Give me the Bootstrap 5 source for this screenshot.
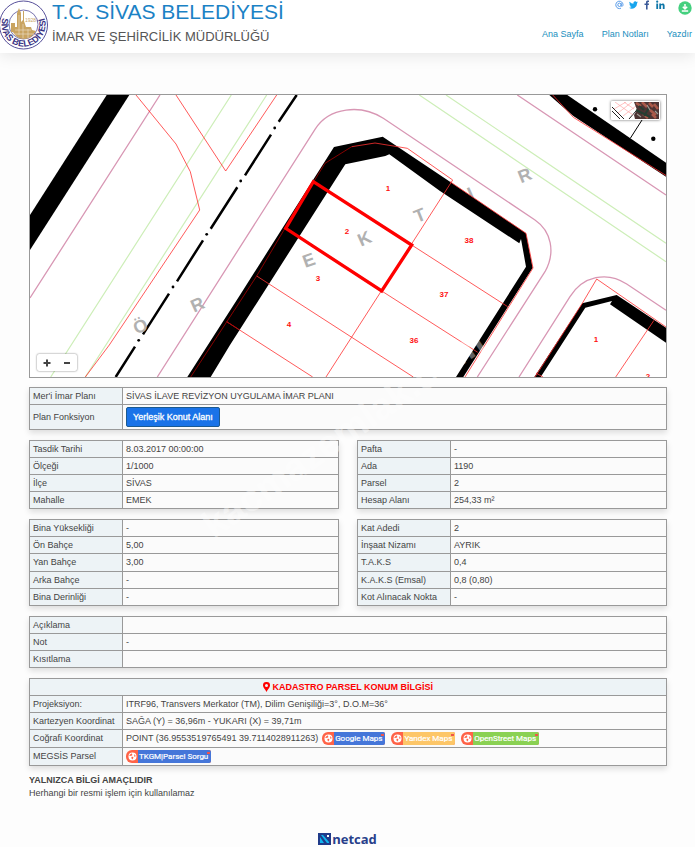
<!DOCTYPE html>
<html lang="tr">
<head>
<meta charset="utf-8">
<meta name="viewport" content="width=device-width, initial-scale=1">
<title>T.C. Sivas Belediyesi - İmar Durumu</title>
<link href="https://cdn.jsdelivr.net/npm/bootstrap@5.3.0/dist/css/bootstrap.min.css" rel="stylesheet">
<style>
body{font-family:"Liberation Sans",Arial,sans-serif;font-size:9px;line-height:13px;color:#444;background:#fdfdfd}
.site-head{background:#fff;height:53px;box-shadow:0 2px 15px rgba(0,0,0,.1)}
.brand-seal{width:48px;height:50px;flex:none}
.brand-name{font-size:21px;line-height:24px;color:#1b82c5;margin:0;font-weight:400}
.brand-unit{font-size:13px;line-height:26px;color:#555;margin:0;font-weight:400}
.brand-text{padding-left:4px}
.head-side{padding-right:3px}
.social{gap:5px;height:17px}
.social a{height:10px;display:block;line-height:0}
.social svg{display:block}
.main-links{gap:18px;padding-top:11px}
.main-links a{color:#1a8fbe;text-decoration:none}
main{padding:41px 28px 0 29px}
.map-box{border:1px solid #999;position:relative;background:#fff;margin-bottom:9px}
.map-box>svg{display:block;width:100%;height:auto}
.map-zoom{left:7px;bottom:6px;background:#fff;border-radius:2px;box-shadow:0 0 2px rgba(0,0,0,.6);display:flex}
.map-zoom button{border:0;background:none;width:20px;height:17px;padding:0;line-height:0;display:flex;align-items:center;justify-content:center}
.map-layer{right:6px;top:6px;border:0;padding:1px;background:#fff;box-shadow:0 0 3px rgba(0,0,0,.6);line-height:0;border-radius:1px}
.info{width:100%;border-collapse:collapse;table-layout:fixed;background:#fbfbfb;box-shadow:0 3px 6px rgba(0,0,0,.13);margin-bottom:10px}
.info tr{height:17px}
.info tr.tall{height:18px}
.info tr.tag-line{height:25px}
.info th,.info td{border:1px solid #999;padding:0 3px;line-height:13px;vertical-align:middle}
.info th{background:#edf3f6;font-weight:400;width:93px;white-space:nowrap}
.info .info-title{color:#f00;font-weight:700;text-align:center;width:auto}
.pair{display:grid;grid-template-columns:1fr 1fr;column-gap:18px}
.fn-btn{background:#1a73e8;color:#fff;border:1px solid #1c5a91;border-radius:2px;font-size:9px;line-height:13px;padding:3px 6px 2px;font-weight:400;-webkit-text-stroke:.3px #fff}
.ext{display:inline-flex;height:13px;line-height:13px;color:#fff;text-decoration:none;border-radius:6px 2px 2px 6px;overflow:hidden;font-family:Roboto,sans-serif;font-size:8px;vertical-align:middle;background:#ff6347;position:relative}
.ext:hover{color:#fff}
.ext svg{margin:2px 1px 2px 2px;flex:none}
.ext span{padding:0 3px 0 1px;-webkit-text-stroke:.2px #fff}
.ext::after{content:"";position:absolute;right:1px;top:2px;width:3px;height:2px;background:#f0544a}
.ext-blue span{background:#4576d9}
.ext-amber span{background:#fdc668}
.ext-green span{background:#8ad153}
.links{gap:6px}
.netcad{color:#27408b;font:700 13px/14px "Open Sans",sans-serif;text-decoration:none;gap:1px}
.wmark{left:167px;top:412px;width:352px;font-size:38px;line-height:42px;font-weight:700;color:rgba(255,255,255,.4);transform:rotate(-35deg);pointer-events:none;white-space:nowrap;text-align:center}
.lot{font:700 8px "Liberation Sans",sans-serif;fill:#f11;text-anchor:middle}
.street{font:700 18px "Liberation Sans",sans-serif;fill:#b1b1b1;text-anchor:middle}
</style>
<script src="https://cdn.jsdelivr.net/npm/bootstrap@5.3.0/dist/js/bootstrap.bundle.min.js"></script>
</head>
<body class="position-relative">
<header class="site-head d-flex align-items-start">
  <svg class="brand-seal" viewBox="0 0 48 50" aria-hidden="true">
    <circle cx="23.500" cy="25" r="24" fill="#fff" stroke="#57509a" stroke-width="1"/>
    <circle cx="23.500" cy="24.500" r="14.500" fill="#fff" stroke="#57509a" stroke-width=".8"/>
    <path d="M11 32V23h4v4h2V13l2-5 2 5v9l2-2V11h1v10l2 6h5l1 3 4 1c-3 5-7 8-12 8s-9-3-11-7z" fill="#c9a461"/>
    <path d="M15 30h16M19 15v20M23 24v14M28 29v9M14 34h20" stroke="#fff" stroke-width=".7" opacity=".6"/>
    <text x="25" y="22" font-size="5" fill="#c9a461">1928</text>
    <path id="ring" d="M4.800 13A22 22 0 1 0 42.200 13" fill="none"/>
    <text font-size="9" font-weight="700" fill="#3b3483"><textPath href="#ring" startOffset="50%" text-anchor="middle">SİVAS BELEDİYESİ</textPath></text>
  </svg>
  <div class="brand-text">
    <h1 class="brand-name">T.C. SİVAS BELEDİYESİ</h1>
    <h2 class="brand-unit">İMAR VE ŞEHİRCİLİK MÜDÜRLÜĞÜ</h2>
  </div>
  <div class="head-side ms-auto d-flex flex-column">
    <div class="social d-flex justify-content-end">
      <a href="#" aria-label="E-posta"><svg width="9" height="10" viewBox="0 0 9 10" fill="none" stroke="#4791e5" stroke-width=".9"><circle cx="4.500" cy="4.800" r="1.700"/><path d="M6.200 3.200v2.500c0 1 1.800 1 1.800-1A3.600 3.700 0 1 0 6 8.200"/></svg></a>
      <a href="#" aria-label="Twitter"><svg width="9" height="10" viewBox="0 0 24 24" fill="#16a5ee"><path d="M24 4.600a10 10 0 0 1-2.800.8 5 5 0 0 0 2.200-2.700 10 10 0 0 1-3.100 1.200 4.900 4.900 0 0 0-8.400 4.500A14 14 0 0 1 1.700 3.100a4.900 4.900 0 0 0 1.500 6.600 5 5 0 0 1-2.200-.6 4.900 4.900 0 0 0 3.900 4.900 5 5 0 0 1-2.200.1 4.900 4.900 0 0 0 4.600 3.400A10 10 0 0 1 0 19.500 14 14 0 0 0 21.500 7z"/></svg></a>
      <a href="#" aria-label="Facebook"><svg width="8" height="10" viewBox="0 0 8 10"><path d="M3 9.500V5H1.500V3.500H3V2.300C3 .8 4 .2 6 .5V2c-1-.1-1.400 0-1.400.7v.8H6L5.800 5H4.600v4.500z" fill="#3b5998"/></svg></a>
      <a href="#" aria-label="LinkedIn"><svg width="9" height="10" viewBox="0 0 9 10" fill="#0e76a8"><circle cx="1.200" cy="1.700" r="1.100"/><path d="M.3 3.500h1.800V9H.3zM3.300 3.500H5v.8c1-1.400 3.600-1.200 3.600 1.200V9H6.800V6c0-1.400-1.700-1.300-1.700 0v3H3.300z"/></svg></a>
      <a href="#" class="ms-2" aria-label="İndir"><svg width="14" height="15" viewBox="0 0 14 15"><circle cx="7" cy="8" r="6.700" fill="#44d07f"/><path d="M7 4v4.500M4.800 6.700 7 9l2.200-2.300M3.800 11h6.400" fill="none" stroke="#fff" stroke-width="1.500"/></svg></a>
    </div>
    <nav class="main-links d-flex"><a href="#">Ana Sayfa</a><a href="#">Plan Notları</a><a href="#">Yazdır</a></nav>
  </div>
</header>

<main>
  <div class="map-box">
    <svg viewBox="30 95 636 282" role="img" aria-label="İmar planı haritası">
      <path d="M106.700 95H129.300L30 250V215z"/>
      <g fill="none" stroke="#d897b4" stroke-width="1.300">
        <path d="M160 95 30 298M157.300 377 315 129.300C329 107 361 104 383.300 118.300L535 220C551 231 556 252 545 271.700L477.300 377M519 377 570 296.700C583 276 607 271 626.700 284L666 310.300M517.300 95 666 195"/>
      </g>
      <g fill="none" stroke="#cdeeb8" stroke-width="1.200">
        <path d="M231.300 95 50.700 377M266.700 95 85.300 377M446 95 666 243.300M419.300 95 666 261.700"/>
      </g>
      <g fill="none" stroke="#000" stroke-width="2.500">
        <path d="M296.700 95 278.700 121.700M271 134.700 245 175.300M237.300 187.300 210.700 228.700M203 240.300 177 281.300M169 293.700 143 334.300M135 346.700 115.700 377"/>
      </g>
      <circle cx="274.700" cy="128" r="1.400"/><circle cx="240.700" cy="181" r="1.400"/><circle cx="206.700" cy="234.300" r="1.400"/><circle cx="173" cy="287" r="1.400"/><circle cx="138.700" cy="340.300" r="1.400"/>
      <g class="street">
        <text transform="translate(143 332) rotate(-24)">Ö</text>
        <text transform="translate(200 310) rotate(-24)">R</text>
        <text transform="translate(311 266) rotate(-20)">E</text>
        <text transform="translate(367 244) rotate(-24)">K</text>
        <text transform="translate(422 221) rotate(-22)">T</text>
        <text transform="translate(473 199) rotate(-24)">I</text>
        <text transform="translate(527 181) rotate(-22)">R</text>
      </g>
      <path d="M549.300 95H567.300L666 162.700V176.700L573.300 116z"/>
      <path d="M643.300 118 630.300 138.300" stroke="#000"/>
      <circle cx="595" cy="109.300" r="2.200"/><circle cx="653.300" cy="138.700" r="2.200"/>
      <path d="M187.300 377 240 295 334 147 382.700 136.700 450 181.700 526 233.300 532.700 267.700 463.300 377H456L526 266.700 521 239 519.300 243.300 440 191 389.300 154.300 385.300 156 345.300 164.300 230 345 210.700 377z"/>
      <path d="M534.300 377 582.300 303.300 616.700 295 666 327.700V342.700L610 304.300 612 301 585.300 307.700 540.700 377z"/>
      <g fill="none" stroke="#ff3030" stroke-width=".8">
        <path d="M136 95 176 144 190.300 171.700 199.700 210 109.300 345 85.300 377M176 95 225.700 171 276.700 95"/>
        <path d="M552.700 95 573.300 117.300 666 175.500"/>
        <path d="M351.700 146.700 375 143 407.300 148.300 452.700 180 326 377"/>
        <path d="M450 181.700 526 233.300 533 268 465 377M256.700 276 413.300 377M226.700 321.700 312.700 377M381.700 291 477.700 352.300M411.700 245 507.700 306.700"/>
        <path d="M535 377 582.300 303.300 596.700 279 666 327M654 320.300 615.700 377M536 373 543 377"/>
      </g>
      <path d="M190.700 377 256.700 276 285 228.300 325 163.300 351.700 146.700M226.700 321.700 238 329" fill="none" stroke="#a80000" stroke-width=".8"/>
      <path d="M313.300 181.700 411.700 245 381.700 291 285.700 228.300z" fill="none" stroke="#f00" stroke-width="3.300"/>
      <g class="lot">
        <text x="388" y="191">1</text><text x="347" y="234">2</text><text x="318" y="281">3</text><text x="289" y="327">4</text>
        <text x="469" y="243">38</text><text x="444" y="297">37</text><text x="414" y="343">36</text><text x="596" y="342">1</text><text x="648" y="379">2</text>
      </g>
    </svg>
    <div class="map-zoom position-absolute">
      <button type="button" aria-label="Yakınlaştır"><svg width="8" height="8"><path d="M4 .5v7M.5 4h7" stroke="#444" stroke-width="2"/></svg></button>
      <button type="button" aria-label="Uzaklaştır"><svg width="8" height="8"><path d="M1 4h6" stroke="#444" stroke-width="2"/></svg></button>
    </div>
    <button type="button" class="map-layer position-absolute" aria-label="Katman seç">
      <svg width="47" height="17" viewBox="0 0 47 17">
        <path fill="#fff" d="M0 0h47v17H0z"/>
        <path d="M0 5 12 17M0 9l8 8M17 17 24 9" stroke="#222"/>
        <path d="M3 0l18 13M12 0l10 7M2 7 14 0M6 11 20 0M11 14 24 4" stroke="#f99" stroke-width=".6" fill="none"/>
        <path fill="#4c3434" d="M22 0h25v17H23l-1-4 3-5z"/>
        <path d="M24 1l5 3M30 0l5 5M37 1l4 4M42 2l4 5M38 8l6 5M31 12l5 4M40 12l4 4" stroke="#a9594a" stroke-width="2.600"/>
        <path d="M24 8l14 7M37 6l-5 8M27 4l5 4" stroke="#263d32" stroke-width="2" fill="none"/>
        <path d="M25 12l4 3M35 3l3 5M43 9l3 3" stroke="#9e9b94" stroke-width="1.200"/>
      </svg>
    </button>
  </div>

  <table class="info">
    <tr><th scope="row">Mer'i İmar Planı</th><td>SİVAS İLAVE REVİZYON UYGULAMA İMAR PLANI</td></tr>
    <tr class="tag-line"><th scope="row">Plan Fonksiyon</th><td><button type="button" class="btn fn-btn">Yerleşik Konut Alanı</button></td></tr>
  </table>

  <div class="pair">
    <table class="info">
      <tr><th scope="row">Tasdik Tarihi</th><td>8.03.2017 00:00:00</td></tr>
      <tr><th scope="row">Ölçeği</th><td>1/1000</td></tr>
      <tr><th scope="row">İlçe</th><td>SİVAS</td></tr>
      <tr><th scope="row">Mahalle</th><td>EMEK</td></tr>
    </table>
    <table class="info">
      <tr><th scope="row">Pafta</th><td>-</td></tr>
      <tr><th scope="row">Ada</th><td>1190</td></tr>
      <tr><th scope="row">Parsel</th><td>2</td></tr>
      <tr><th scope="row">Hesap Alanı</th><td>254,33 m²</td></tr>
    </table>
    <table class="info">
      <tr><th scope="row">Bina Yüksekliği</th><td>-</td></tr>
      <tr><th scope="row">Ön Bahçe</th><td>5,00</td></tr>
      <tr class="tall"><th scope="row">Yan Bahçe</th><td>3,00</td></tr>
      <tr><th scope="row">Arka Bahçe</th><td>-</td></tr>
      <tr><th scope="row">Bina Derinliği</th><td>-</td></tr>
    </table>
    <table class="info">
      <tr><th scope="row">Kat Adedi</th><td>2</td></tr>
      <tr><th scope="row">İnşaat Nizamı</th><td>AYRIK</td></tr>
      <tr class="tall"><th scope="row">T.A.K.S</th><td>0,4</td></tr>
      <tr><th scope="row">K.A.K.S (Emsal)</th><td>0,8 (0,80)</td></tr>
      <tr><th scope="row">Kot Alınacak Nokta</th><td>-</td></tr>
    </table>
  </div>

  <table class="info">
    <tr><th scope="row">Açıklama</th><td></td></tr>
    <tr><th scope="row">Not</th><td>-</td></tr>
    <tr><th scope="row">Kısıtlama</th><td></td></tr>
  </table>

  <table class="info mb-2">
    <colgroup><col style="width:93px"><col></colgroup>
    <tr><th class="info-title" colspan="2"><svg width="7" height="10" viewBox="0 0 7 10" class="align-text-bottom"><path fill="#f00" fill-rule="evenodd" d="M3.500 0A3.400 3.400 0 0 0 0 3.500C0 5.600 2.200 7.200 3.500 10 4.800 7.200 7 5.600 7 3.500A3.400 3.400 0 0 0 3.500 0zm0 2a1.500 1.500 0 1 1 0 3 1.500 1.500 0 0 1 0-3z"/></svg> KADASTRO PARSEL KONUM BİLGİSİ</th></tr>
    <tr><th scope="row">Projeksiyon:</th><td>ITRF96, Transvers Merkator (TM), Dilim Genişiliği=3°, D.O.M=36°</td></tr>
    <tr><th scope="row">Kartezyen Koordinat</th><td>SAĞA (Y) = 36,96m - YUKARI (X) = 39,71m</td></tr>
    <tr class="tall"><th scope="row">Coğrafi Koordinat</th><td><div class="d-flex align-items-center gap-1"><span>POINT (36.9553519765491 39.7114028911263)</span><div class="links d-flex">
      <a href="#" class="ext ext-blue"><svg width="9" height="9" viewBox="0 0 9 9"><circle cx="4.500" cy="4.500" r="4" fill="#fff"/><path d="M1 3.500 3.500 1.200 4.500 3 3 4zM4 4.500l1.500 1L4.500 7.500 3.200 6zM6 2l1.800 2-1.300 1z" fill="#ff6347"/></svg><span>Google Maps</span></a>
      <a href="#" class="ext ext-amber"><svg width="9" height="9" viewBox="0 0 9 9"><circle cx="4.500" cy="4.500" r="4" fill="#fff"/><path d="M1 3.500 3.500 1.200 4.500 3 3 4zM4 4.500l1.500 1L4.500 7.500 3.200 6zM6 2l1.800 2-1.300 1z" fill="#ff6347"/></svg><span>Yandex Maps</span></a>
      <a href="#" class="ext ext-green"><svg width="9" height="9" viewBox="0 0 9 9"><circle cx="4.500" cy="4.500" r="4" fill="#fff"/><path d="M1 3.500 3.500 1.200 4.500 3 3 4zM4 4.500l1.500 1L4.500 7.500 3.200 6zM6 2l1.800 2-1.300 1z" fill="#ff6347"/></svg><span>OpenStreet Maps</span></a></div></div></td></tr>
    <tr class="tall"><th scope="row">MEGSİS Parsel</th><td><div class="d-flex"><a href="#" class="ext ext-blue"><svg width="9" height="9" viewBox="0 0 9 9"><circle cx="4.500" cy="4.500" r="4" fill="#fff"/><path d="M1 3.500 3.500 1.200 4.500 3 3 4zM4 4.500l1.500 1L4.500 7.500 3.200 6zM6 2l1.800 2-1.300 1z" fill="#ff6347"/></svg><span>TKGM|Parsel Sorgu</span></a></div></td></tr>
  </table>
  <div class="fw-bold">YALNIZCA BİLGİ AMAÇLIDIR</div>
  <div>Herhangi bir resmi işlem için kullanılamaz</div>
</main>
<footer class="d-flex justify-content-center pt-4 mt-2">
  <a href="#" class="netcad d-flex align-items-center"><svg width="13" height="12" viewBox="0 0 13 12"><path fill="#203b8a" d="M0 0h13v12H0z"/><path fill="#10b5ee" d="M2 4l4 6H2zM3 2h2l6 7v1H9z"/><path fill="#fff" d="M9 2h2v2H9z"/></svg><span>netcad</span></a>
</footer>
<div class="wmark position-absolute" aria-hidden="true">kacmazemlak.com</div>
</body>
</html>
